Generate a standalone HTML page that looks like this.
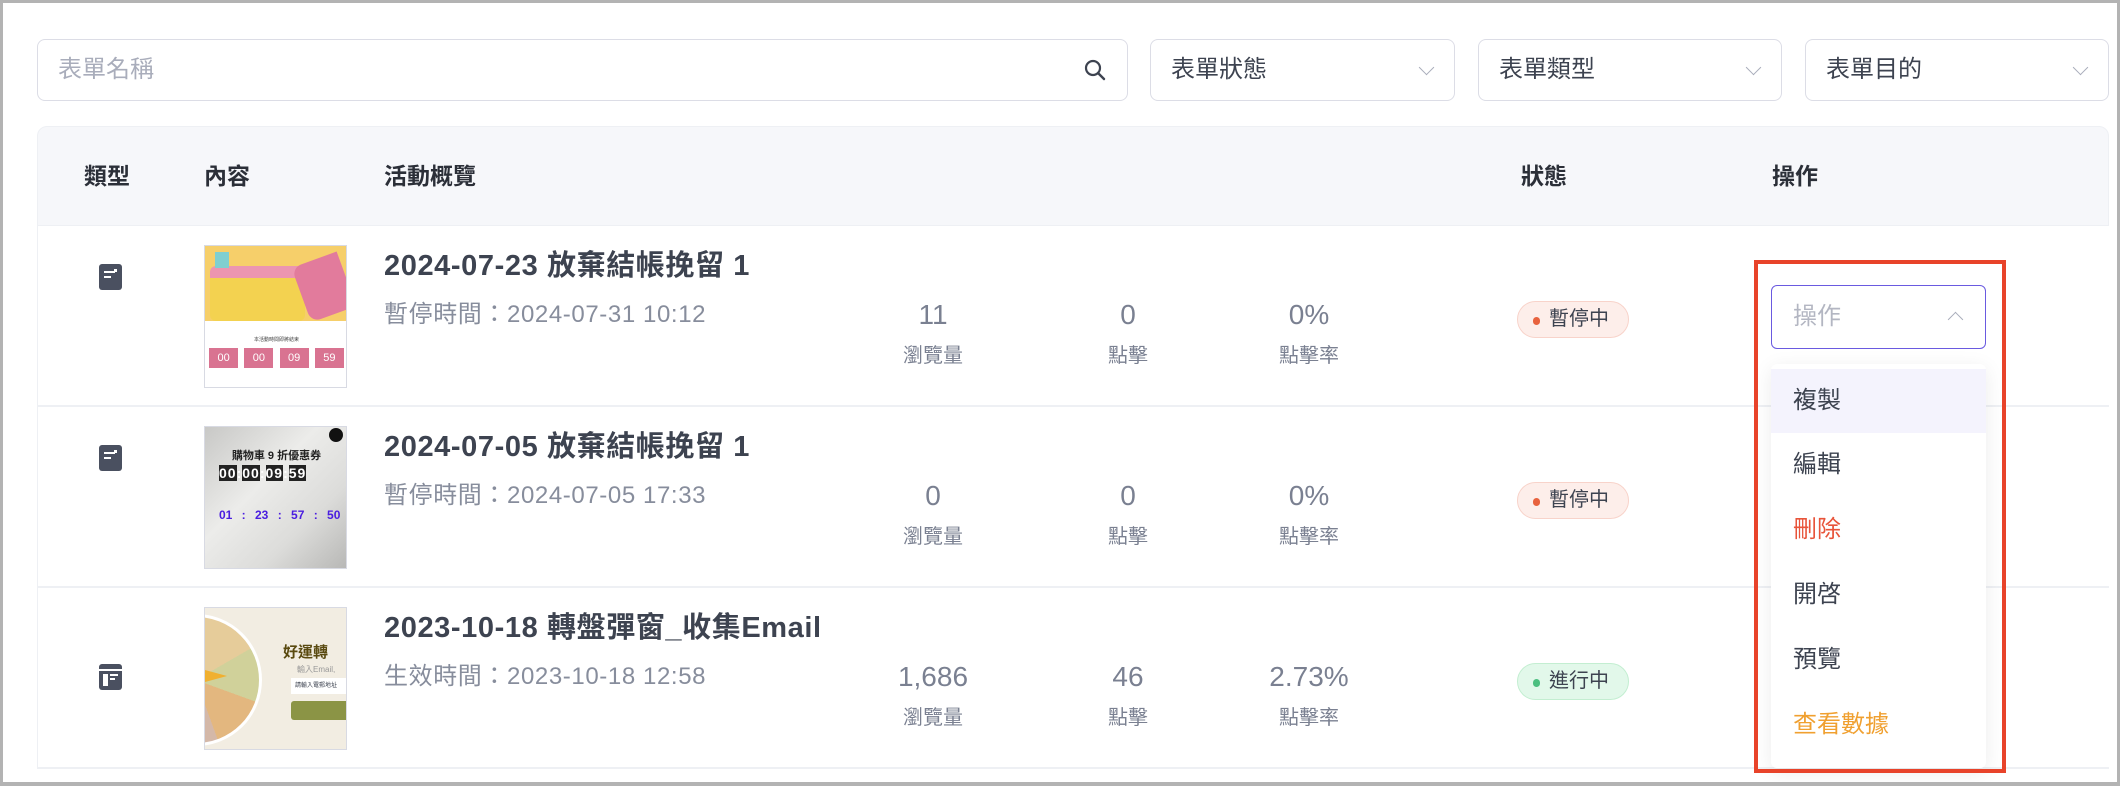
<!DOCTYPE html>
<html><head><meta charset="utf-8"><style>
*{box-sizing:border-box;margin:0;padding:0}
body{width:2120px;height:786px;background:#fff;position:relative;overflow:hidden;font-family:"Liberation Sans","Noto Sans CJK TC",sans-serif;color:#3d4350}
.frame{position:absolute;left:0;top:0;width:2120px;height:786px;border:3px solid #b3b3b3;border-bottom-width:4px}
.abs{position:absolute}
.inp{position:absolute;top:39px;height:62px;border:1.5px solid #dcdde6;border-radius:8px;background:#fff;font-size:24px;line-height:59px;padding-left:20px}
.chev{position:absolute;right:22px;top:22px;width:11px;height:11px;border-right:1.5px solid #a9adbb;border-bottom:1.5px solid #a9adbb;transform:rotate(45deg)}
.hdr{position:absolute;left:37px;top:126px;width:2072px;height:100px;background:#f6f7fa;border:1px solid #eef0f4;border-radius:10px 10px 0 0}
.th{position:absolute;top:160px;font-size:23px;font-weight:bold;color:#2b2f38;line-height:32px}
.row{position:absolute;left:37px;width:2072px;height:181px;border-bottom:2px solid #eef0f4;border-left:1px solid #eef0f4}
.ticon{position:absolute;left:99px;width:23px;height:26px;background:#4a5060;border-radius:3px}
.thumb{position:absolute;left:204px;width:143px;height:143px;border:1.5px solid #d8dae3;overflow:hidden;background:#fff}
.title{position:absolute;left:384px;font-size:29px;letter-spacing:0.6px;font-weight:bold;color:#3d4350;line-height:34px}
.sub{position:absolute;left:384px;font-size:24px;letter-spacing:0.6px;color:#878d9c;line-height:30px}
.num{position:absolute;width:200px;text-align:center;font-size:28px;color:#7a8091;line-height:32px}
.lbl{position:absolute;width:200px;text-align:center;font-size:20px;color:#7a8091;line-height:28px}
.badge{position:absolute;left:1517px;width:112px;height:37px;border-radius:19px;font-size:20px;line-height:35px;padding-left:31px;color:#3d4350}
.badge i{position:absolute;left:15px;top:15px;width:7px;height:8px;border-radius:4px}
.p{background:#fdeeea;border:1.5px solid #f8d3ca}.p i{background:#e8623e}
.g{background:#e2f8ea;border:1.5px solid #c3eed1}.g i{background:#4cbf80}
.mi{position:absolute;left:1771px;width:215px;height:64px;font-size:24px;line-height:64px;padding-left:22px;color:#3d4350}
</style></head><body>
<div class="inp" style="left:37px;width:1091px;color:#a9adbb">表單名稱
<svg class="abs" style="right:20px;top:18px" width="24" height="24" viewBox="0 0 24 24"><circle cx="10" cy="10" r="7" fill="none" stroke="#3d4350" stroke-width="2.2"/><path d="M15 15l6 6" stroke="#3d4350" stroke-width="2.4" stroke-linecap="round"/></svg></div>
<div class="inp" style="left:1150px;width:305px">表單狀態<span class="chev"></span></div>
<div class="inp" style="left:1478px;width:304px">表單類型<span class="chev"></span></div>
<div class="inp" style="left:1805px;width:304px">表單目的<span class="chev"></span></div>

<div class="hdr"></div>
<div class="th" style="left:84px">類型</div>
<div class="th" style="left:204px">內容</div>
<div class="th" style="left:384px">活動概覽</div>
<div class="th" style="left:1521px">狀態</div>
<div class="th" style="left:1772px">操作</div>

<div class="row" style="top:226px"></div>
<div class="row" style="top:407px"></div>
<div class="row" style="top:588px"></div>

<!-- row1 -->
<div class="ticon" style="top:264px"><div class="abs" style="left:5px;top:7px;width:11px;height:2px;background:#fff"></div><div class="abs" style="left:5px;top:12px;width:7px;height:2px;background:#fff"></div><div class="abs" style="left:15px;top:5px;width:3px;height:3px;background:#fff"></div></div>
<div class="thumb" style="top:245px">
 <div class="abs" style="left:0;top:0;width:143px;height:75px;background:#f6cf6a"></div>
 <div class="abs" style="left:5px;top:20px;width:95px;height:55px;background:#f3d250;border-top:12px solid #ec95b0;border-radius:6px"></div>
 <div class="abs" style="left:95px;top:12px;width:48px;height:58px;background:#e27b9c;border-radius:10px 0 0 10px;transform:rotate(-20deg)"></div>
 <div class="abs" style="left:10px;top:6px;width:14px;height:16px;background:#7fcfd0"></div>
 <div class="abs" style="left:0;top:90px;width:143px;text-align:center;font-size:5px;color:#444">本活動時間即將結束</div>
 <div class="abs" style="left:0;top:102px;width:143px;display:flex;justify-content:space-around;padding:0 1px">
  <span style="background:#d97391;color:#fff;width:29px;height:20px;font-size:11px;text-align:center;line-height:20px">00</span><span style="background:#d97391;color:#fff;width:29px;height:20px;font-size:11px;text-align:center;line-height:20px">00</span><span style="background:#d97391;color:#fff;width:29px;height:20px;font-size:11px;text-align:center;line-height:20px">09</span><span style="background:#d97391;color:#fff;width:29px;height:20px;font-size:11px;text-align:center;line-height:20px">59</span></div>
</div>
<div class="title" style="top:249px">2024-07-23 放棄結帳挽留 1</div>
<div class="sub" style="top:300px">暫停時間：2024-07-31 10:12</div>
<div class="num" style="left:833px;top:299px">11</div><div class="lbl" style="left:833px;top:342px">瀏覽量</div>
<div class="num" style="left:1028px;top:299px">0</div><div class="lbl" style="left:1028px;top:342px">點擊</div>
<div class="num" style="left:1209px;top:299px">0%</div><div class="lbl" style="left:1209px;top:342px">點擊率</div>
<div class="badge p" style="top:301px"><i></i>暫停中</div>

<!-- row2 -->
<div class="ticon" style="top:445px"><div class="abs" style="left:5px;top:7px;width:11px;height:2px;background:#fff"></div><div class="abs" style="left:5px;top:12px;width:7px;height:2px;background:#fff"></div><div class="abs" style="left:15px;top:5px;width:3px;height:3px;background:#fff"></div></div>
<div class="thumb" style="top:426px;background:linear-gradient(135deg,#c8c8c6,#ececea 40%,#dcdcda 70%,#b8b8b6)">
 <div class="abs" style="left:0;top:20px;width:143px;text-align:center;font-size:11px;font-weight:bold;color:#222">購物車 9 折優惠券</div>
 <div class="abs" style="left:14px;top:38px;font-size:14px;font-weight:bold;color:#fff;letter-spacing:1px"><span style="background:#222">00</span>:<span style="background:#222">00</span>:<span style="background:#222">09</span>:<span style="background:#222">59</span></div>
 <div class="abs" style="left:14px;top:81px;font-size:12px;font-weight:bold;color:#4a1ee0;word-spacing:6px">01 : 23 : 57 : 50</div>
 <div class="abs" style="left:124px;top:1px;width:14px;height:14px;border-radius:7px;background:#111"></div>
</div>
<div class="title" style="top:430px">2024-07-05 放棄結帳挽留 1</div>
<div class="sub" style="top:481px">暫停時間：2024-07-05 17:33</div>
<div class="num" style="left:833px;top:480px">0</div><div class="lbl" style="left:833px;top:523px">瀏覽量</div>
<div class="num" style="left:1028px;top:480px">0</div><div class="lbl" style="left:1028px;top:523px">點擊</div>
<div class="num" style="left:1209px;top:480px">0%</div><div class="lbl" style="left:1209px;top:523px">點擊率</div>
<div class="badge p" style="top:482px"><i></i>暫停中</div>

<!-- row3 -->
<div class="ticon" style="top:664px"><div class="abs" style="left:0;top:5px;width:23px;height:2px;background:#fff"></div><div class="abs" style="left:4px;top:10px;width:5px;height:12px;background:#fff"></div><div class="abs" style="left:11px;top:10px;width:8px;height:2px;background:#fff"></div><div class="abs" style="left:11px;top:14px;width:5px;height:2px;background:#fff"></div></div>
<div class="thumb" style="top:607px;background:#f2ede2">
 <div class="abs" style="left:-75px;top:6px;width:132px;height:132px;border-radius:66px;background:conic-gradient(#e6cc9a 0 60deg,#d0d19a 60deg 110deg,#e3b77f 110deg 160deg,#d4b8a8 160deg 210deg,#c0b88a 210deg 360deg);border:3px solid #fff"></div>
 <div class="abs" style="left:0;top:62px;width:22px;height:12px;background:#f0b030;clip-path:polygon(0 0,100% 50%,0 100%)"></div>
 <div class="abs" style="left:78px;top:33px;font-size:15px;font-weight:bold;color:#5a4a10">好運轉</div>
 <div class="abs" style="left:92px;top:56px;font-size:8px;color:#999">輸入Email,</div>
 <div class="abs" style="left:86px;top:70px;width:60px;height:16px;background:#fff;font-size:6px;line-height:16px;padding-left:4px">請輸入電郵地址</div>
 <div class="abs" style="left:86px;top:93px;width:60px;height:19px;background:#8b9445;border-radius:3px"></div>
</div>
<div class="title" style="top:611px">2023-10-18 轉盤彈窗_收集Email</div>
<div class="sub" style="top:662px">生效時間：2023-10-18 12:58</div>
<div class="num" style="left:833px;top:661px">1,686</div><div class="lbl" style="left:833px;top:704px">瀏覽量</div>
<div class="num" style="left:1028px;top:661px">46</div><div class="lbl" style="left:1028px;top:704px">點擊</div>
<div class="num" style="left:1209px;top:661px">2.73%</div><div class="lbl" style="left:1209px;top:704px">點擊率</div>
<div class="badge g" style="top:663px"><i></i>進行中</div>

<!-- dropdown -->
<div class="abs" style="left:1771px;top:285px;width:215px;height:64px;border:1.5px solid #6a5ae0;border-radius:6px;background:#fff;font-size:24px;line-height:61px;padding-left:21px;color:#b3b6c2">操作<span class="abs" style="right:24px;top:28px;width:11px;height:11px;border-left:1.5px solid #a9adbb;border-top:1.5px solid #a9adbb;transform:rotate(45deg)"></span></div>
<div class="abs" style="left:1771px;top:364px;width:215px;height:404px;background:#fff;border-radius:6px;box-shadow:0 4px 20px rgba(0,0,0,0.08)"></div>
<div class="mi" style="top:369px;background:#f4f3fd">複製</div>
<div class="mi" style="top:433px">編輯</div>
<div class="mi" style="top:498px;color:#e8543a">刪除</div>
<div class="mi" style="top:563px">開啓</div>
<div class="mi" style="top:628px">預覽</div>
<div class="mi" style="top:693px;color:#f0a030">查看數據</div>
<div class="abs" style="left:1754px;top:260px;width:252px;height:513px;border:4px solid #e8432a"></div>

<div class="frame"></div>
</body></html>
